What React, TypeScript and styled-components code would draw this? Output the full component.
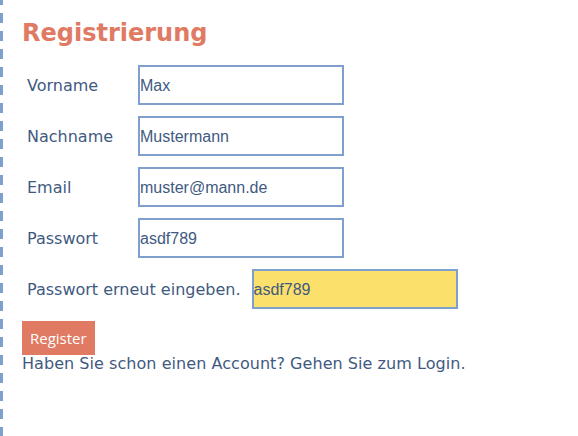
import React from 'react';
import styled, { createGlobalStyle } from 'styled-components';

const GlobalStyle = createGlobalStyle`
  html, body {
    margin: 0;
    padding: 0;
    background: #ffffff;
  }
`;

// left edge: 3px dashes, ~9px long every 18px
const Page = styled.div`
  min-height: 436px;
  box-sizing: border-box;
  padding: 17px 0 0 22px;
  background-image: repeating-linear-gradient(
    to bottom,
    #7f9fcf 0 5px,
    transparent 5px 13px,
    #7f9fcf 13px 18px
  );
  background-size: 3px 100%;
  background-repeat: no-repeat;
  font-family: 'DejaVu Sans', Verdana, sans-serif;
  color: #3f5a7f;
`;

const Title = styled.h1`
  margin: 0 0 16px 0;
  font-size: 24px;
  line-height: 32px;
  font-weight: bold;
  color: #e07a62;
`;

const Form = styled.form`
  display: flex;
  flex-direction: column;
  gap: 11px;
`;

const Row = styled.div`
  display: flex;
  align-items: center;
  padding-left: 5px;
`;

const Label = styled.label`
  min-width: 100px;
  margin-right: 11px;
  font-size: 16px;
  white-space: nowrap;
`;

const Input = styled.input<{ $active?: boolean }>`
  box-sizing: border-box;
  width: 206px;
  height: 40px;
  padding: 1px 0 0 0;
  border: 2px solid #7f9fcf;
  border-radius: 0;
  background: ${(p) => (p.$active ? '#fce06c' : '#ffffff')};
  font-family: 'Liberation Sans', Arial, sans-serif;
  font-size: 16px;
  color: #3f5a7f;
  caret-color: #3f5a7f;
  outline: none;
`;

const Button = styled.button`
  display: block;
  margin-top: 12px;
  height: 34px;
  padding: 0 8px;
  border: none;
  border-radius: 0;
  background: #e07a62;
  color: #ffffff;
  font-family: 'Open Sans', 'Noto Sans', sans-serif;
  font-size: 15px;
  cursor: pointer;
`;

const Footer = styled.p`
  margin: 0;
  font-size: 16px;
  line-height: 18px;
  letter-spacing: 0.05px;
`;

const fields = [
  { label: 'Vorname', value: 'Max' },
  { label: 'Nachname', value: 'Mustermann' },
  { label: 'Email', value: 'muster@mann.de' },
  { label: 'Passwort', value: 'asdf789' },
  { label: 'Passwort erneut eingeben.', value: 'asdf789', active: true },
];

const App: React.FC = (): JSX.Element => {
  return (
    <>
      <GlobalStyle />
      <Page>
        <Title>Registrierung</Title>
        <Form onSubmit={(e) => e.preventDefault()}>
          {fields.map((f) => (
            <Row key={f.label}>
              <Label>{f.label}</Label>
              <Input defaultValue={f.value} $active={f.active} autoFocus={f.active} />
            </Row>
          ))}
        </Form>
        <Button type="button">Register</Button>
        <Footer>Haben Sie schon einen Account? Gehen Sie zum Login.</Footer>
      </Page>
    </>
  );
};

export default App;
